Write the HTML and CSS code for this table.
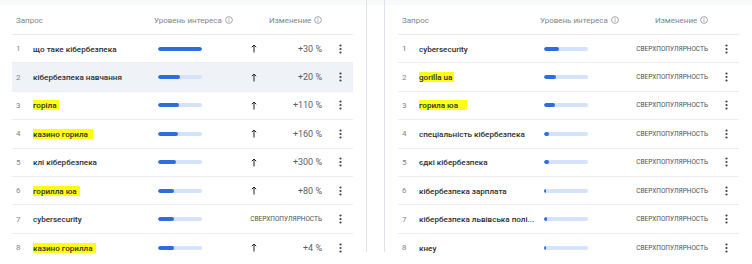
FILE: index.html
```html
<!DOCTYPE html>
<html lang="ru">
<head>
<meta charset="utf-8">
<title>Trends</title>
<link rel="stylesheet" href="styles.css">
</head>
<body>
<div class="page">
  <section class="card card-left">
    <div class="table">
      <div class="thead">
        <span class="th th-query">Запрос</span>
        <span class="th th-interest">Уровень интереса <svg class="info" viewBox="0 0 8 8"><circle cx="4" cy="4" r="3.4"/><line x1="4" y1="3.5" x2="4" y2="6"/><circle class="dot" cx="4" cy="2.3" r="0.5"/></svg></span>
        <span class="th th-change">Изменение <svg class="info" viewBox="0 0 8 8"><circle cx="4" cy="4" r="3.4"/><line x1="4" y1="3.5" x2="4" y2="6"/><circle class="dot" cx="4" cy="2.3" r="0.5"/></svg></span>
      </div>
      <div class="row">
        <span class="num">1</span>
        <span class="query">що таке кібербезпека</span>
        <span class="bar"><span class="fill" style="width:100%"></span></span>
        <span class="change"><svg class="arrow" viewBox="0 0 6 9"><path d="M3 8.5V1M0.8 3.2L3 1l2.2 2.2"/></svg><span class="pct">+30 %</span></span>
        <span class="more"><svg viewBox="0 0 3 10"><circle cx="1.5" cy="1.5" r="1.1"/><circle cx="1.5" cy="5" r="1.1"/><circle cx="1.5" cy="8.5" r="1.1"/></svg></span>
      </div>
      <div class="row row-hover">
        <span class="num">2</span>
        <span class="query">кібербезпека навчання</span>
        <span class="bar"><span class="fill" style="width:50%"></span></span>
        <span class="change"><svg class="arrow" viewBox="0 0 6 9"><path d="M3 8.5V1M0.8 3.2L3 1l2.2 2.2"/></svg><span class="pct">+20 %</span></span>
        <span class="more"><svg viewBox="0 0 3 10"><circle cx="1.5" cy="1.5" r="1.1"/><circle cx="1.5" cy="5" r="1.1"/><circle cx="1.5" cy="8.5" r="1.1"/></svg></span>
      </div>
      <div class="row">
        <span class="num">3</span>
        <span class="query"><mark class="hl">горіла</mark></span>
        <span class="bar"><span class="fill" style="width:48%"></span></span>
        <span class="change"><svg class="arrow" viewBox="0 0 6 9"><path d="M3 8.5V1M0.8 3.2L3 1l2.2 2.2"/></svg><span class="pct">+110 %</span></span>
        <span class="more"><svg viewBox="0 0 3 10"><circle cx="1.5" cy="1.5" r="1.1"/><circle cx="1.5" cy="5" r="1.1"/><circle cx="1.5" cy="8.5" r="1.1"/></svg></span>
      </div>
      <div class="row">
        <span class="num">4</span>
        <span class="query"><mark class="hl hl-wide">казино горила</mark></span>
        <span class="bar"><span class="fill" style="width:46%"></span></span>
        <span class="change"><svg class="arrow" viewBox="0 0 6 9"><path d="M3 8.5V1M0.8 3.2L3 1l2.2 2.2"/></svg><span class="pct">+160 %</span></span>
        <span class="more"><svg viewBox="0 0 3 10"><circle cx="1.5" cy="1.5" r="1.1"/><circle cx="1.5" cy="5" r="1.1"/><circle cx="1.5" cy="8.5" r="1.1"/></svg></span>
      </div>
      <div class="row">
        <span class="num">5</span>
        <span class="query">клі кібербезпека</span>
        <span class="bar"><span class="fill" style="width:41%"></span></span>
        <span class="change"><svg class="arrow" viewBox="0 0 6 9"><path d="M3 8.5V1M0.8 3.2L3 1l2.2 2.2"/></svg><span class="pct">+300 %</span></span>
        <span class="more"><svg viewBox="0 0 3 10"><circle cx="1.5" cy="1.5" r="1.1"/><circle cx="1.5" cy="5" r="1.1"/><circle cx="1.5" cy="8.5" r="1.1"/></svg></span>
      </div>
      <div class="row">
        <span class="num">6</span>
        <span class="query"><mark class="hl hl-mid">горилла юа</mark></span>
        <span class="bar"><span class="fill" style="width:36%"></span></span>
        <span class="change"><svg class="arrow" viewBox="0 0 6 9"><path d="M3 8.5V1M0.8 3.2L3 1l2.2 2.2"/></svg><span class="pct">+80 %</span></span>
        <span class="more"><svg viewBox="0 0 3 10"><circle cx="1.5" cy="1.5" r="1.1"/><circle cx="1.5" cy="5" r="1.1"/><circle cx="1.5" cy="8.5" r="1.1"/></svg></span>
      </div>
      <div class="row">
        <span class="num">7</span>
        <span class="query">cybersecurity</span>
        <span class="bar"><span class="fill" style="width:36%"></span></span>
        <span class="change change-break"><span class="breakout">Сверхпопулярность</span></span>
        <span class="more"><svg viewBox="0 0 3 10"><circle cx="1.5" cy="1.5" r="1.1"/><circle cx="1.5" cy="5" r="1.1"/><circle cx="1.5" cy="8.5" r="1.1"/></svg></span>
      </div>
      <div class="row">
        <span class="num">8</span>
        <span class="query"><mark class="hl hl-mid">казино горилла</mark></span>
        <span class="bar"><span class="fill" style="width:36%"></span></span>
        <span class="change"><svg class="arrow" viewBox="0 0 6 9"><path d="M3 8.5V1M0.8 3.2L3 1l2.2 2.2"/></svg><span class="pct">+4 %</span></span>
        <span class="more"><svg viewBox="0 0 3 10"><circle cx="1.5" cy="1.5" r="1.1"/><circle cx="1.5" cy="5" r="1.1"/><circle cx="1.5" cy="8.5" r="1.1"/></svg></span>
      </div>
    </div>
  </section>

  <section class="card card-right">
    <div class="table">
      <div class="thead">
        <span class="th th-query">Запрос</span>
        <span class="th th-interest">Уровень интереса <svg class="info" viewBox="0 0 8 8"><circle cx="4" cy="4" r="3.4"/><line x1="4" y1="3.5" x2="4" y2="6"/><circle class="dot" cx="4" cy="2.3" r="0.5"/></svg></span>
        <span class="th th-change">Изменение <svg class="info" viewBox="0 0 8 8"><circle cx="4" cy="4" r="3.4"/><line x1="4" y1="3.5" x2="4" y2="6"/><circle class="dot" cx="4" cy="2.3" r="0.5"/></svg></span>
      </div>
      <div class="row">
        <span class="num num-active">1</span>
        <span class="query">cybersecurity</span>
        <span class="bar"><span class="fill" style="width:35%"></span></span>
        <span class="change change-break"><span class="breakout">Сверхпопулярность</span></span>
        <span class="more"><svg viewBox="0 0 3 10"><circle cx="1.5" cy="1.5" r="1.1"/><circle cx="1.5" cy="5" r="1.1"/><circle cx="1.5" cy="8.5" r="1.1"/></svg></span>
      </div>
      <div class="row">
        <span class="num">2</span>
        <span class="query"><mark class="hl">gorilla ua</mark></span>
        <span class="bar"><span class="fill" style="width:28%"></span></span>
        <span class="change change-break"><span class="breakout">Сверхпопулярность</span></span>
        <span class="more"><svg viewBox="0 0 3 10"><circle cx="1.5" cy="1.5" r="1.1"/><circle cx="1.5" cy="5" r="1.1"/><circle cx="1.5" cy="8.5" r="1.1"/></svg></span>
      </div>
      <div class="row">
        <span class="num">3</span>
        <span class="query"><mark class="hl hl-tail">горила юа</mark></span>
        <span class="bar"><span class="fill" style="width:26%"></span></span>
        <span class="change change-break"><span class="breakout">Сверхпопулярность</span></span>
        <span class="more"><svg viewBox="0 0 3 10"><circle cx="1.5" cy="1.5" r="1.1"/><circle cx="1.5" cy="5" r="1.1"/><circle cx="1.5" cy="8.5" r="1.1"/></svg></span>
      </div>
      <div class="row">
        <span class="num">4</span>
        <span class="query">спеціальність кібербезпека</span>
        <span class="bar"><span class="fill" style="width:12%"></span></span>
        <span class="change change-break"><span class="breakout">Сверхпопулярность</span></span>
        <span class="more"><svg viewBox="0 0 3 10"><circle cx="1.5" cy="1.5" r="1.1"/><circle cx="1.5" cy="5" r="1.1"/><circle cx="1.5" cy="8.5" r="1.1"/></svg></span>
      </div>
      <div class="row">
        <span class="num">5</span>
        <span class="query">єдкі кібербезпека</span>
        <span class="bar"><span class="fill" style="width:12%"></span></span>
        <span class="change change-break"><span class="breakout">Сверхпопулярность</span></span>
        <span class="more"><svg viewBox="0 0 3 10"><circle cx="1.5" cy="1.5" r="1.1"/><circle cx="1.5" cy="5" r="1.1"/><circle cx="1.5" cy="8.5" r="1.1"/></svg></span>
      </div>
      <div class="row">
        <span class="num">6</span>
        <span class="query">кібербезпека зарплата</span>
        <span class="bar"><span class="fill" style="width:5%"></span></span>
        <span class="change change-break"><span class="breakout">Сверхпопулярность</span></span>
        <span class="more"><svg viewBox="0 0 3 10"><circle cx="1.5" cy="1.5" r="1.1"/><circle cx="1.5" cy="5" r="1.1"/><circle cx="1.5" cy="8.5" r="1.1"/></svg></span>
      </div>
      <div class="row">
        <span class="num">7</span>
        <span class="query">кібербезпека львівська полі...</span>
        <span class="bar"><span class="fill" style="width:7%"></span></span>
        <span class="change change-break"><span class="breakout">Сверхпопулярность</span></span>
        <span class="more"><svg viewBox="0 0 3 10"><circle cx="1.5" cy="1.5" r="1.1"/><circle cx="1.5" cy="5" r="1.1"/><circle cx="1.5" cy="8.5" r="1.1"/></svg></span>
      </div>
      <div class="row">
        <span class="num">8</span>
        <span class="query">кнеу</span>
        <span class="bar"><span class="fill" style="width:5%"></span></span>
        <span class="change change-break"><span class="breakout">Сверхпопулярность</span></span>
        <span class="more"><svg viewBox="0 0 3 10"><circle cx="1.5" cy="1.5" r="1.1"/><circle cx="1.5" cy="5" r="1.1"/><circle cx="1.5" cy="8.5" r="1.1"/></svg></span>
      </div>
    </div>
  </section>
</div>
</body>
</html>
```

FILE: styles.css
```css
* { box-sizing: border-box; }

html, body {
  margin: 0;
  padding: 0;
}

body {
  width: 752px;
  height: 264px;
  overflow: hidden;
  background: linear-gradient(#f8f9fb 0, #f8f9fb 5px, #ffffff 5px);
  font-family: Roboto, "Noto Sans", "Liberation Sans", sans-serif;
  color: #202124;
}

.page {
  display: flex;
  gap: 17px;
}

.card {
  height: 252px;
}

.card-left {
  width: 367px;
  padding-left: 12px;
  border-right: 1px solid #dde2ea;
}

.card-right {
  width: 368px;
  padding-left: 13px;
  border-left: 1px solid #dde2ea;
}

.table {
  width: 341px;
}

.thead {
  display: grid;
  grid-template-columns: 142px 115px 84px;
  align-items: center;
  height: 35px;
  padding-top: 6px;
  border-bottom: 1px solid #e8eaed;
  font-size: 8px;
  color: #80868b;
}

.th-query { padding-left: 4px; }

.th {
  display: flex;
  align-items: center;
  white-space: nowrap;
}

.info {
  width: 8px;
  height: 8px;
  margin-left: 3px;
  fill: none;
  stroke: #80868b;
  stroke-width: 0.7;
}

.info .dot {
  fill: #80868b;
  stroke: none;
}

.row {
  display: grid;
  grid-template-columns: 21px 125px 44px 120px 31px;
  align-items: center;
  height: 28.4px;
  border-bottom: 1px solid #eceef1;
  background: #ffffff;
}

.row:last-child { border-bottom: none; }

.row-hover { background: #eff2f6; }

.num {
  padding-left: 4px;
  font-size: 8px;
  color: #80868b;
}

.num-active { color: #4a7bd6; }

.query {
  font-size: 8.1px;
  font-weight: 500;
  color: #2a2e33;
  white-space: nowrap;
  overflow: hidden;
  text-overflow: ellipsis;
  padding-right: 2px;
}

.hl {
  background: #ffff14;
  color: #2a2e33;
  padding: 1px 2px 1px 1px;
  margin-left: -1px;
}

.hl-wide {
  padding-left: 6px;
  margin-left: -6px;
  padding-right: 5px;
}

.hl-mid {
  padding-left: 4px;
  margin-left: -4px;
  padding-right: 3px;
}

.hl-tail {
  padding-left: 1px;
  padding-right: 9px;
}

.bar {
  display: block;
  height: 4px;
  border-radius: 2px;
  background: #d4e2fb;
  overflow: hidden;
}

.fill {
  display: block;
  height: 100%;
  border-radius: 2px;
  background: #2f6ce0;
  min-width: 2px;
}

.change {
  display: flex;
  align-items: center;
  justify-content: space-between;
  padding-left: 49px;
}

.change-break {
  justify-content: flex-end;
  padding-left: 0;
}

.arrow {
  width: 6px;
  height: 9px;
  fill: none;
  stroke: #202124;
  stroke-width: 1;
}

.pct {
  font-size: 9px;
  color: #5a5f65;
}

.breakout {
  font-size: 6.5px;
  text-transform: uppercase;
  color: #4d5156;
  white-space: nowrap;
}

.more {
  display: flex;
  justify-content: flex-end;
  padding-right: 11px;
}

.more svg {
  width: 3px;
  height: 10px;
  fill: #3c4043;
}
```
